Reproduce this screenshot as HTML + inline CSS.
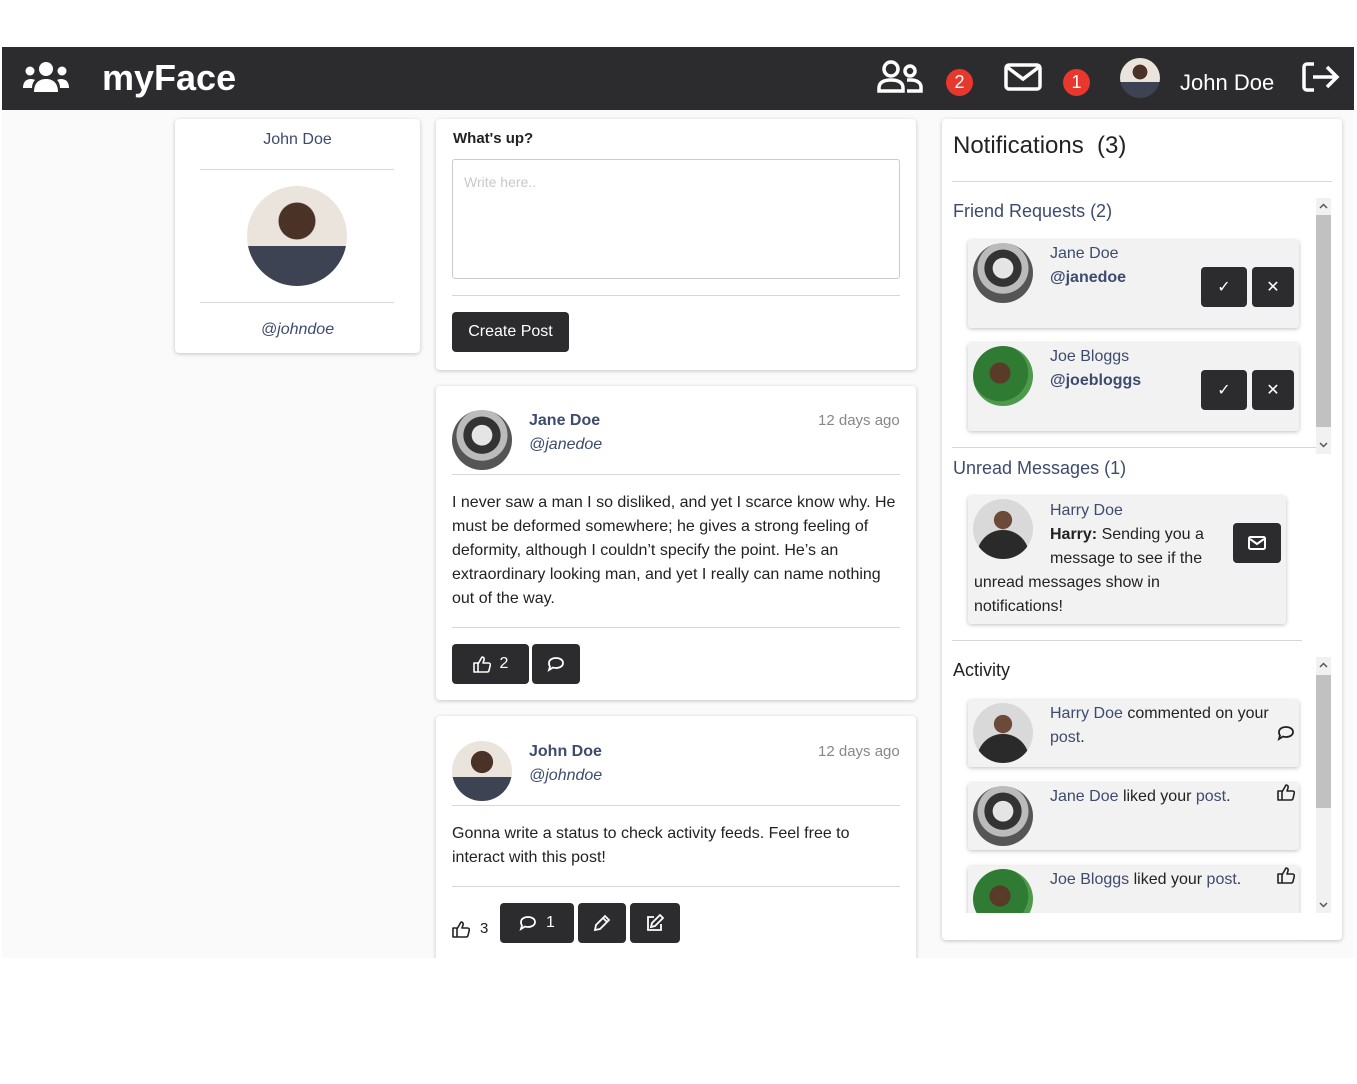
<!DOCTYPE html>
<html><head><meta charset="utf-8"><style>
*{box-sizing:border-box;margin:0;padding:0}
body{width:1357px;height:1084px;background:#fff;position:relative;font-family:"Liberation Sans",sans-serif;color:#222;overflow:hidden}
.abs{position:absolute}
.nav{left:2px;top:47px;width:1352px;height:63px;background:#2c2b2e}
.bg{left:2px;top:110px;width:1352px;height:848px;background:#fafafa}
.card{position:absolute;background:#fff;border-radius:4px;box-shadow:0 1px 4px rgba(0,0,0,.22)}
.lnk{color:#3d4b6e}
.hr{position:absolute;height:1px;background:#d6d6d6}
.av{position:absolute;border-radius:50%;overflow:hidden}
.john{background:radial-gradient(circle at 50% 35%,#4a3326 0 22%,transparent 23%),linear-gradient(#eae4dc 0 60%,#3d4353 60%);}
.jane{background:radial-gradient(circle at 50% 42%,#e5e5e5 0 22%,#333 23% 40%,#bbb 41% 55%,#555 56%)}
.joe{background:radial-gradient(circle at 45% 45%,#5a3a28 0 22%,#2f7b34 23% 60%,#4d9a4b 61%)}
.harry{background:radial-gradient(circle at 50% 35%,#6b4a3a 0 18%,transparent 19%),radial-gradient(circle at 50% 95%,#2a2a2a 0 40%,transparent 41%),#d9d9d9}
.btn{position:absolute;background:#2c2b2e;border-radius:4px;color:#fff;display:flex;align-items:center;justify-content:center;font-size:16px}
.badge{position:absolute;width:27px;height:27px;border-radius:50%;background:#e8372d;color:#fff;font-size:18px;display:flex;align-items:center;justify-content:center}
.item{position:absolute;background:#f2f2f2;border-radius:3px;box-shadow:0 1px 4px rgba(0,0,0,.25)}
.t16{font-size:16px;line-height:24px}
.sb{position:absolute;background:#f1f1f1}
</style></head><body>
<svg width="0" height="0" style="position:absolute"><defs>
<symbol id="thumb" viewBox="0 0 18 18"><path d="M1 8h4v9H1z M5 9l4-7c1.5 0 2.5 1 2 3l-1 3h5.5c1.2 0 2 1 1.8 2l-1.3 5.5c-.2 1-1 1.5-2 1.5H5" fill="none" stroke="currentColor" stroke-width="1.6" stroke-linejoin="round"/></symbol>
<symbol id="bub" viewBox="0 0 18 16"><path d="M9 2c4 0 7 2 7 5s-3 5-7 5c-1 0-2 0-3-.5L2 14l1-3.5C2 9.5 2 8 2 7c0-3 3-5 7-5z" fill="none" stroke="currentColor" stroke-width="1.8"/></symbol>
</defs></svg>
<div class="abs nav"></div>
<div class="abs bg"></div>
<svg class="abs" style="left:22px;top:60px" width="48" height="34" viewBox="0 0 48 34"><g fill="#fff"><circle cx="24" cy="9" r="7"/><circle cx="8" cy="11" r="4.5"/><circle cx="40" cy="11" r="4.5"/><path d="M12 32c0-9 5-13 12-13s12 4 12 13z"/><path d="M1 28c0-6 3-9 8-9 2 0 3 .5 4 1-2 2-3 5-3 8z"/><path d="M47 28c0-6-3-9-8-9-2 0-3 .5-4 1 2 2 3 5 3 8z"/></g></svg>
<div class="abs" style="left:102px;top:57px;font-size:36px;font-weight:bold;color:#fff">myFace</div>
<svg class="abs" style="left:877px;top:60px" width="46" height="34" viewBox="0 0 46 34" fill="none" stroke="#fff" stroke-width="3.5"><circle cx="14" cy="9" r="7"/><path d="M2 31v-3c0-5 4-8 12-8s12 3 12 8v3z"/><circle cx="33" cy="11" r="5"/><path d="M30 20h4c6 0 10 3 10 7v4h-14"/></svg>
<div class="badge" style="left:946px;top:69px">2</div>
<svg class="abs" style="left:1004px;top:63px" width="38" height="28" viewBox="0 0 38 28" fill="none" stroke="#fff" stroke-width="3.5"><rect x="2" y="2" width="34" height="24" rx="3"/><path d="M3 4l16 12 16-12"/></svg>
<div class="badge" style="left:1063px;top:69px">1</div>
<div class="av john" style="left:1120px;top:58px;width:40px;height:40px"></div>
<div class="abs" style="left:1180px;top:70px;font-size:22px;color:#fff">John Doe</div>
<svg class="abs" style="left:1302px;top:62px" width="38" height="30" viewBox="0 0 38 30" fill="none" stroke="#fff" stroke-width="3.5"><path d="M12 2H5a3 3 0 0 0-3 3v20a3 3 0 0 0 3 3h7"/><path d="M11 15h23M25 5l10 10-10 10"/></svg>

<div class="card" style="left:175px;top:119px;width:245px;height:234px"></div>
<div class="abs lnk" style="left:175px;top:131px;width:245px;text-align:center;font-size:16px">John Doe</div>
<div class="hr" style="left:200px;top:169px;width:194px"></div>
<div class="av john" style="left:247px;top:186px;width:100px;height:100px"></div>
<div class="hr" style="left:200px;top:302px;width:194px"></div>
<div class="abs lnk" style="left:175px;top:321px;width:245px;text-align:center;font-size:16px;font-style:italic">@johndoe</div>

<div class="card" style="left:436px;top:119px;width:480px;height:251px"></div>
<div class="abs" style="left:453px;top:130px;font-size:15px;font-weight:bold">What's up?</div>
<div class="abs" style="left:452px;top:159px;width:448px;height:120px;border:1px solid #ccc;border-radius:3px;padding:14px 11px;color:#c8c8c8;font-size:14px">Write here..</div>
<div class="hr" style="left:452px;top:295px;width:448px"></div>
<div class="btn" style="left:452px;top:312px;width:117px;height:40px">Create Post</div>

<div class="card" style="left:436px;top:386px;width:480px;height:314px"></div>
<div class="av jane" style="left:452px;top:410px;width:60px;height:60px"></div>
<div class="abs lnk" style="left:529px;top:412px;font-size:16px;font-weight:bold">Jane Doe</div>
<div class="abs lnk" style="left:529px;top:436px;font-size:16px;font-style:italic">@janedoe</div>
<div class="abs" style="left:818px;top:412px;font-size:15px;color:#888">12 days ago</div>
<div class="hr" style="left:452px;top:474px;width:448px"></div>
<div class="abs t16" style="left:452px;top:491px;width:450px">I never saw a man I so disliked, and yet I scarce know why. He must be deformed somewhere; he gives a strong feeling of deformity, although I couldn’t specify the point. He’s an extraordinary looking man, and yet I really can name nothing out of the way.</div>
<div class="hr" style="left:452px;top:627px;width:448px"></div>
<div class="btn" style="left:452px;top:644px;width:77px;height:40px;color:#fff"><svg width="18" height="18" style="color:#fff"><use href="#thumb"/></svg>&nbsp;&nbsp;2</div>
<div class="btn" style="left:532px;top:644px;width:48px;height:40px"><svg width="18" height="16" style="color:#fff"><use href="#bub"/></svg></div>

<div class="card" style="left:436px;top:716px;width:480px;height:260px"></div>
<div class="av john" style="left:452px;top:741px;width:60px;height:60px"></div>
<div class="abs lnk" style="left:529px;top:743px;font-size:16px;font-weight:bold">John Doe</div>
<div class="abs lnk" style="left:529px;top:767px;font-size:16px;font-style:italic">@johndoe</div>
<div class="abs" style="left:818px;top:743px;font-size:15px;color:#888">12 days ago</div>
<div class="hr" style="left:452px;top:805px;width:448px"></div>
<div class="abs t16" style="left:452px;top:822px;width:450px">Gonna write a status to check activity feeds. Feel free to interact with this post!</div>
<div class="hr" style="left:452px;top:886px;width:448px"></div>
<svg class="abs" style="left:452px;top:920px;color:#222" width="18" height="18"><use href="#thumb"/></svg>
<div class="abs" style="left:480px;top:920px;font-size:15px">3</div>
<div class="btn" style="left:500px;top:903px;width:74px;height:40px"><svg width="18" height="16" style="color:#fff"><use href="#bub"/></svg>&nbsp;&nbsp;1</div>
<div class="btn" style="left:578px;top:903px;width:48px;height:40px"><svg width="18" height="18" viewBox="0 0 18 18" fill="none" stroke="#fff" stroke-width="1.8"><path d="M12 2l4 4-9 9-5 1 1-5z M10 4l4 4"/></svg></div>
<div class="btn" style="left:630px;top:903px;width:50px;height:40px"><svg width="20" height="18" viewBox="0 0 20 18" fill="none" stroke="#fff" stroke-width="1.8"><path d="M9 3H3v13h13v-6"/><path d="M15 1l3 3-8 8-4 1 1-4z"/></svg></div>
<div class="abs" style="left:0;top:958px;width:1357px;height:126px;background:#fff"></div>

<div class="card" style="left:942px;top:119px;width:400px;height:821px"></div>
<div class="abs" style="left:953px;top:132px;font-size:24px">Notifications&nbsp; (3)</div>
<div class="hr" style="left:952px;top:181px;width:380px"></div>
<div class="abs lnk" style="left:953px;top:201px;font-size:18px">Friend Requests (2)</div>
<div class="sb" style="left:1316px;top:198px;width:15px;height:256px"></div>
<div class="abs" style="left:1316px;top:215px;width:15px;height:212px;background:#c1c1c1"></div>
<svg class="abs" style="left:1319px;top:203px" width="9" height="6" viewBox="0 0 9 6" fill="none" stroke="#555" stroke-width="1.5"><path d="M1 5l3.5-3.5L8 5"/></svg>
<svg class="abs" style="left:1319px;top:442px" width="9" height="6" viewBox="0 0 9 6" fill="none" stroke="#555" stroke-width="1.5"><path d="M1 1l3.5 3.5L8 1"/></svg>

<div class="item" style="left:968px;top:240px;width:331px;height:88px"></div>
<div class="av jane" style="left:973px;top:243px;width:60px;height:60px"></div>
<div class="abs lnk" style="left:1050px;top:245px;font-size:16px">Jane Doe</div>
<div class="abs lnk" style="left:1050px;top:269px;font-size:16px;font-weight:bold">@janedoe</div>
<div class="btn" style="left:1201px;top:267px;width:46px;height:40px">✓</div>
<div class="btn" style="left:1252px;top:267px;width:42px;height:40px">✕</div>

<div class="item" style="left:968px;top:343px;width:331px;height:88px"></div>
<div class="av joe" style="left:973px;top:346px;width:60px;height:60px"></div>
<div class="abs lnk" style="left:1050px;top:348px;font-size:16px">Joe Bloggs</div>
<div class="abs lnk" style="left:1050px;top:372px;font-size:16px;font-weight:bold">@joebloggs</div>
<div class="btn" style="left:1201px;top:370px;width:46px;height:40px">✓</div>
<div class="btn" style="left:1252px;top:370px;width:42px;height:40px">✕</div>

<div class="hr" style="left:952px;top:447px;width:364px"></div>
<div class="abs lnk" style="left:953px;top:458px;font-size:18px">Unread Messages (1)</div>
<div class="item" style="left:968px;top:496px;width:318px;height:128px"></div>
<div class="av harry" style="left:973px;top:499px;width:60px;height:60px"></div>
<div class="abs t16" style="left:974px;top:499px;width:240px;font-size:16px"><span style="float:left;width:76px;height:70px"></span><span class="lnk">Harry Doe</span><br><b>Harry:</b> Sending you a message to see if the unread messages show in notifications!</div>
<div class="btn" style="left:1233px;top:523px;width:48px;height:40px"><svg width="18" height="14" viewBox="0 0 18 14" fill="none" stroke="#fff" stroke-width="2"><rect x="1" y="1" width="16" height="12" rx="1.5"/><path d="M2 3l7 5 7-5"/></svg></div>

<div class="hr" style="left:952px;top:640px;width:350px"></div>
<div class="abs" style="left:953px;top:660px;font-size:18px">Activity</div>
<div class="sb" style="left:1316px;top:657px;width:15px;height:256px"></div>
<div class="abs" style="left:1316px;top:675px;width:15px;height:133px;background:#c1c1c1"></div>
<svg class="abs" style="left:1319px;top:662px" width="9" height="6" viewBox="0 0 9 6" fill="none" stroke="#555" stroke-width="1.5"><path d="M1 5l3.5-3.5L8 5"/></svg>
<svg class="abs" style="left:1319px;top:902px" width="9" height="6" viewBox="0 0 9 6" fill="none" stroke="#555" stroke-width="1.5"><path d="M1 1l3.5 3.5L8 1"/></svg>

<div class="item" style="left:968px;top:700px;width:331px;height:67px"></div>
<div class="av harry" style="left:973px;top:703px;width:60px;height:60px"></div>
<div class="abs t16" style="left:1050px;top:702px;width:230px"><span class="lnk">Harry Doe</span> commented on your <span class="lnk">post</span>.</div>
<svg class="abs" style="left:1277px;top:725px;color:#222" width="18" height="16"><use href="#bub"/></svg>

<div class="item" style="left:968px;top:783px;width:331px;height:67px"></div>
<div class="av jane" style="left:973px;top:786px;width:60px;height:60px"></div>
<div class="abs t16" style="left:1050px;top:785px"><span class="lnk">Jane Doe</span> liked your <span class="lnk">post</span>.</div>
<svg class="abs" style="left:1277px;top:783px;color:#222" width="18" height="18"><use href="#thumb"/></svg>

<div class="item" style="left:968px;top:866px;width:331px;height:67px"></div>
<div class="av joe" style="left:973px;top:869px;width:60px;height:60px"></div>
<div class="abs t16" style="left:1050px;top:868px"><span class="lnk">Joe Bloggs</span> liked your <span class="lnk">post</span>.</div>
<svg class="abs" style="left:1277px;top:866px;color:#222" width="18" height="18"><use href="#thumb"/></svg>
<div class="abs" style="left:960px;top:913px;width:356px;height:24px;background:#fff"></div>
</body></html>
